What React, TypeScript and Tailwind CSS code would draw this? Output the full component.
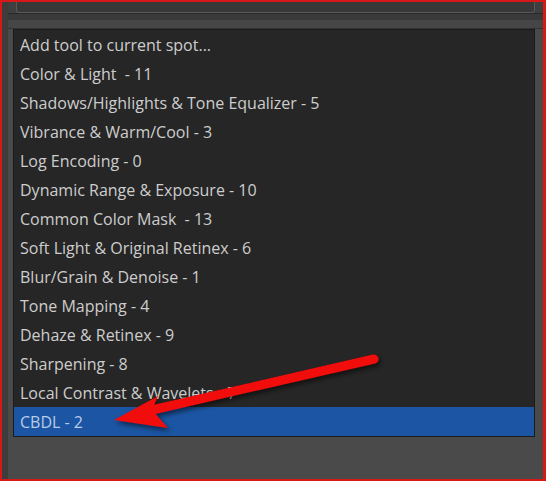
import React from 'react';

const tools = [
  'Add tool to current spot...',
  'Color & Light  - 11',
  'Shadows/Highlights & Tone Equalizer - 5',
  'Vibrance & Warm/Cool - 3',
  'Log Encoding - 0',
  'Dynamic Range & Exposure - 10',
  'Common Color Mask  - 13',
  'Soft Light & Original Retinex - 6',
  'Blur/Grain & Denoise - 1',
  'Tone Mapping - 4',
  'Dehaze & Retinex - 9',
  'Sharpening - 8',
  'Local Contrast & Wavelets - 7',
  'CBDL - 2',
];

const Arrow: React.FC = () => (
  <svg className="pointer-events-none absolute left-0 top-0" width="546" height="481">
    <defs>
      <filter id="sh" x="-20%" y="-50%" width="140%" height="200%">
        <feDropShadow dx="2" dy="3" stdDeviation="2.5" floodColor="#000" floodOpacity="0.55" />
      </filter>
    </defs>
    <g filter="url(#sh)">
      <line x1="372" y1="357" x2="150" y2="408" stroke="#f20a0a" strokeWidth="9" strokeLinecap="round" />
      <polygon points="112,418 156,394 150,408 166,426" fill="#f20a0a" />
    </g>
  </svg>
);

export default function App() {
  const selected = tools.length - 1;

  return (
    <div className="relative h-[481px] w-[546px] overflow-hidden border-b-2 border-l-2 border-r-[3px] border-t-2 border-[#d81818] bg-[#4a4a4a] font-['Open_Sans','Noto_Sans',sans-serif]">
      <div className="flex h-full">
        <div className="w-[6px] shrink-0 bg-[#3d3d3d]" />
        <div className="flex flex-1 flex-col">
          <div className="h-[12px] border-b border-[#2a2a2a] bg-[#3f3f3f] px-[8px]">
            <div className="h-[11px] rounded-b-[3px] border-x border-b border-[#5a5a5a] bg-[#383838]" />
          </div>
          <div className="h-[6px] bg-[#3a3a3a]" />
          <div className="h-[9px] border-b border-[#333] bg-[#464646]" />
          <div className="ml-[5px] mr-[8px] border border-[#1b1b1b] bg-[#262626]">
            {tools.map((t, i) => (
              <div
                key={t}
                className={
                  i === selected
                    ? 'flex h-[29px] items-center whitespace-pre bg-[#1b55a3] pl-[6px] text-[16px] text-[#b9cbe6]'
                    : 'flex h-[29px] items-center whitespace-pre pl-[6px] text-[16px] text-[#cdcdcd]'
                }
              >
                {t}
              </div>
            ))}
          </div>
        </div>
      </div>
      <Arrow />
    </div>
  );
}
